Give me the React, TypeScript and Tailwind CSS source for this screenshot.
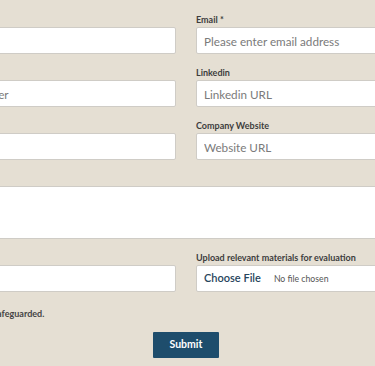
import React from "react";

const inputCls =
  "h-[27px] w-full rounded-[2px] border border-[#cfccc6] bg-white px-[7px] text-[11.7px] text-[#333] placeholder:text-[#7a7a7a] outline-none";

const labelCls = "mb-[3px] h-[9px] text-[9px] font-bold leading-[9px] text-[#3d3d3d] whitespace-nowrap";

function Field({ label, placeholder }: { label: string; placeholder: string }) {
  return (
    <div className="flex flex-col">
      <label className={labelCls}>{label}</label>
      <input className={inputCls} placeholder={placeholder} />
    </div>
  );
}

export default function App() {
  return (
    <div className="h-[366px] w-[375px] overflow-hidden bg-[#e5dfd3]" style={{ fontFamily: "Lato, 'Noto Sans', sans-serif" }}>
      <div className="ml-[-124px] w-[620px] pt-[15px]">
        <div className="grid grid-cols-2 gap-x-[20px] gap-y-[14px]">
          <Field label="Name *" placeholder="Full name" />
          <Field label="Email *" placeholder="Please enter email address" />
          <Field label="Phone" placeholder="Add your phone number" />
          <Field label="Linkedin" placeholder="Linkedin URL" />
          <Field label="Company" placeholder="Company" />
          <Field label="Company Website" placeholder="Website URL" />
          <div className="col-span-2 flex flex-col">
            <label className={labelCls}>Message</label>
            <textarea className="h-[53px] w-full resize-none rounded-[2px] border border-[#cfccc6] bg-white px-[7px] outline-none" />
          </div>
          <Field label="Referral" placeholder="" />
          <div className="flex flex-col">
            <label className={labelCls}>Upload relevant materials for evaluation</label>
            <div className="flex h-[27px] w-full items-center rounded-[2px] border border-[#cfccc6] bg-white px-[7px]">
              <span className="text-[11px] font-semibold text-[#27455c]">Choose File</span>
              <span className="ml-[13px] text-[8.7px] text-[#555]">No file chosen</span>
            </div>
          </div>
        </div>
        <p className="mt-[15px] whitespace-nowrap text-[9px] font-bold text-[#444]">Your information will be fully safeguarded.</p>
        <div className="mt-[11px] flex justify-center">
          <button className="h-[26px] w-[66px] rounded-[1px] bg-[#1e4d6c] text-[10.5px] font-bold text-white">Submit</button>
        </div>
      </div>
    </div>
  );
}
